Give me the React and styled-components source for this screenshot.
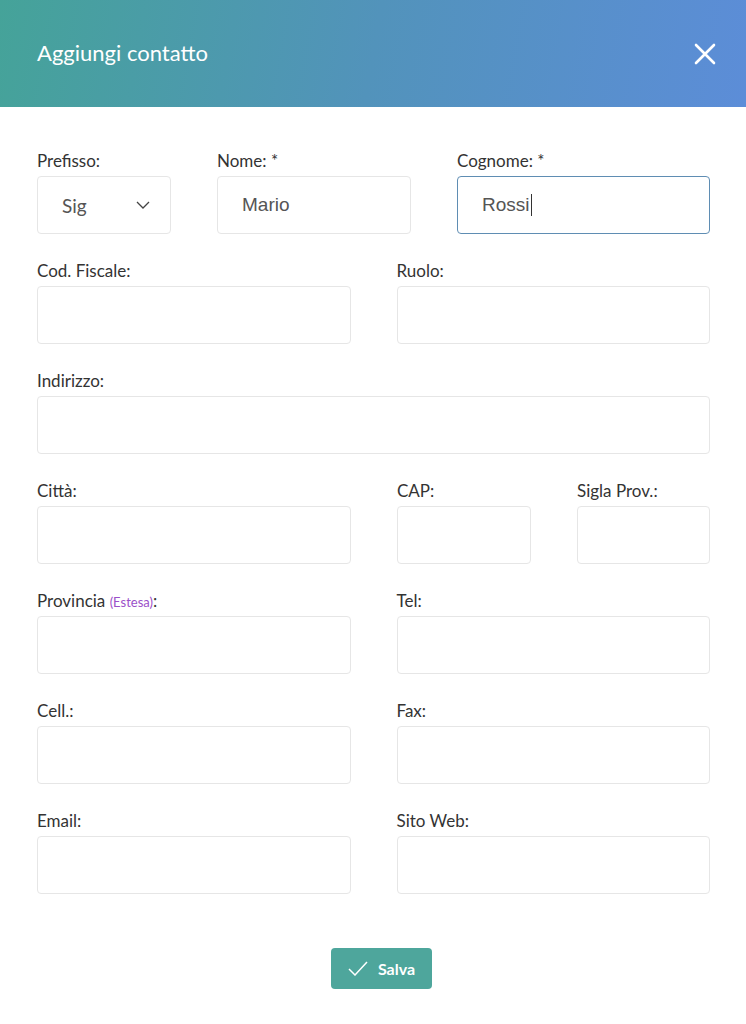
import React from "react";
import styled, { createGlobalStyle } from "styled-components";

const GlobalStyle = createGlobalStyle`
  html, body {
    margin: 0;
    padding: 0;
    background: #ffffff;
  }
  * {
    box-sizing: border-box;
  }
`;

const ROWS = [
  { cols: "1fr 1fr", fields: [{ label: "Cod. Fiscale:" }, { label: "Ruolo:" }] },
  { cols: "1fr", fields: [{ label: "Indirizzo:" }] },
  {
    cols: "314px 134px 1fr",
    fields: [{ label: "Città:" }, { label: "CAP:" }, { label: "Sigla Prov.:" }],
  },
  {
    cols: "1fr 1fr",
    fields: [{ label: "Provincia", note: "(Estesa)" }, { label: "Tel:" }],
  },
  { cols: "1fr 1fr", fields: [{ label: "Cell.:" }, { label: "Fax:" }] },
  { cols: "1fr 1fr", fields: [{ label: "Email:" }, { label: "Sito Web:" }] },
];

const App = () => {
  return (
    <>
      <GlobalStyle />
      <Modal>
        <Header>
          <Title>Aggiungi contatto</Title>
          <CloseButton aria-label="Chiudi">
            <svg width="22" height="22" viewBox="0 0 22 22">
              <path
                d="M2 2 L20 20 M20 2 L2 20"
                stroke="#ffffff"
                strokeWidth="2.6"
                strokeLinecap="round"
              />
            </svg>
          </CloseButton>
        </Header>

        <Form>
          <Row $cols="134px 194px 1fr">
            <Field>
              <Label>Prefisso:</Label>
              <Select>
                <SelectValue>Sig</SelectValue>
                <svg width="14" height="8" viewBox="0 0 14 8">
                  <path
                    d="M1 1 L7 7 L13 1"
                    fill="none"
                    stroke="#444"
                    strokeWidth="1.3"
                  />
                </svg>
              </Select>
            </Field>
            <Field>
              <Label>Nome: *</Label>
              <Box>
                <Value>Mario</Value>
              </Box>
            </Field>
            <Field>
              <Label>Cognome: *</Label>
              <Box $focused>
                <Value>Rossi</Value>
                <Caret />
              </Box>
            </Field>
          </Row>

          {ROWS.map((row, i) => (
            <Row key={i} $cols={row.cols}>
              {row.fields.map((f) => (
                <Field key={f.label}>
                  <Label>
                    {f.label}
                    {f.note && (
                      <>
                        {" "}
                        <Note>{f.note}</Note>:
                      </>
                    )}
                  </Label>
                  <Box />
                </Field>
              ))}
            </Row>
          ))}

          <Actions>
            <SaveButton>
              <svg width="20" height="15" viewBox="0 0 20 15">
                <path
                  d="M1 8 L7 14 L19 1"
                  fill="none"
                  stroke="#ffffff"
                  strokeWidth="1.5"
                />
              </svg>
              Salva
            </SaveButton>
          </Actions>
        </Form>
      </Modal>
    </>
  );
};

const Modal = styled.div`
  width: 746px;
  min-height: 1024px;
  background: #ffffff;
  font-family: Lato, "Open Sans", sans-serif;
`;

const Header = styled.header`
  height: 107px;
  display: flex;
  align-items: center;
  justify-content: space-between;
  padding: 0 30px 0 37px;
  background: linear-gradient(100deg, #45a399 0%, #5293bb 50%, #5c8dd8 100%);
`;

const Title = styled.h2`
  margin: 0 0 2px;
  font-weight: 400;
  font-size: 22px;
  color: #ffffff;
`;

const CloseButton = styled.button`
  border: none;
  background: transparent;
  padding: 0;
  width: 22px;
  height: 22px;
  cursor: pointer;
  display: flex;
`;

const Form = styled.form`
  display: flex;
  flex-direction: column;
  gap: 27px;
  padding: 44px 36px 0 37px;
`;

const Row = styled.div`
  display: grid;
  grid-template-columns: ${(p) => p.$cols};
  column-gap: 46px;
`;

const Field = styled.div`
  display: flex;
  flex-direction: column;
  min-width: 0;
`;

const Label = styled.label`
  height: 20px;
  line-height: 20px;
  margin-bottom: 5px;
  font-size: 17px;
  color: #333333;
`;

const Note = styled.span`
  font-size: 13px;
  color: #9b4fc9;
`;

const Box = styled.div`
  height: 58px;
  display: flex;
  align-items: center;
  padding: 0 24px;
  border: ${(p) => (p.$focused ? "1.5px solid #5f8db3" : "1px solid #e6e6e6")};
  border-radius: 4px;
  background: #ffffff;
`;

const Value = styled.span`
  font-family: "Liberation Sans", Arial, sans-serif;
  font-size: 19px;
  color: #555555;
`;

const Caret = styled.span`
  width: 1px;
  height: 22px;
  margin-left: 1px;
  background: #333333;
`;

const Select = styled(Box)`
  justify-content: space-between;
  padding: 0 20px 0 24px;
`;

const SelectValue = styled.span`
  font-size: 19px;
  color: #555555;
`;

const Actions = styled.div`
  display: flex;
  justify-content: center;
  padding: 27px 0 0 16px;
`;

const SaveButton = styled.button`
  height: 41px;
  width: 101px;
  display: flex;
  align-items: center;
  justify-content: center;
  gap: 10px;
  border: none;
  border-radius: 4px;
  background: #4ea69c;
  color: #ffffff;
  font-family: Lato, "Open Sans", sans-serif;
  font-weight: 700;
  font-size: 16px;
  cursor: pointer;
`;

export default App;
